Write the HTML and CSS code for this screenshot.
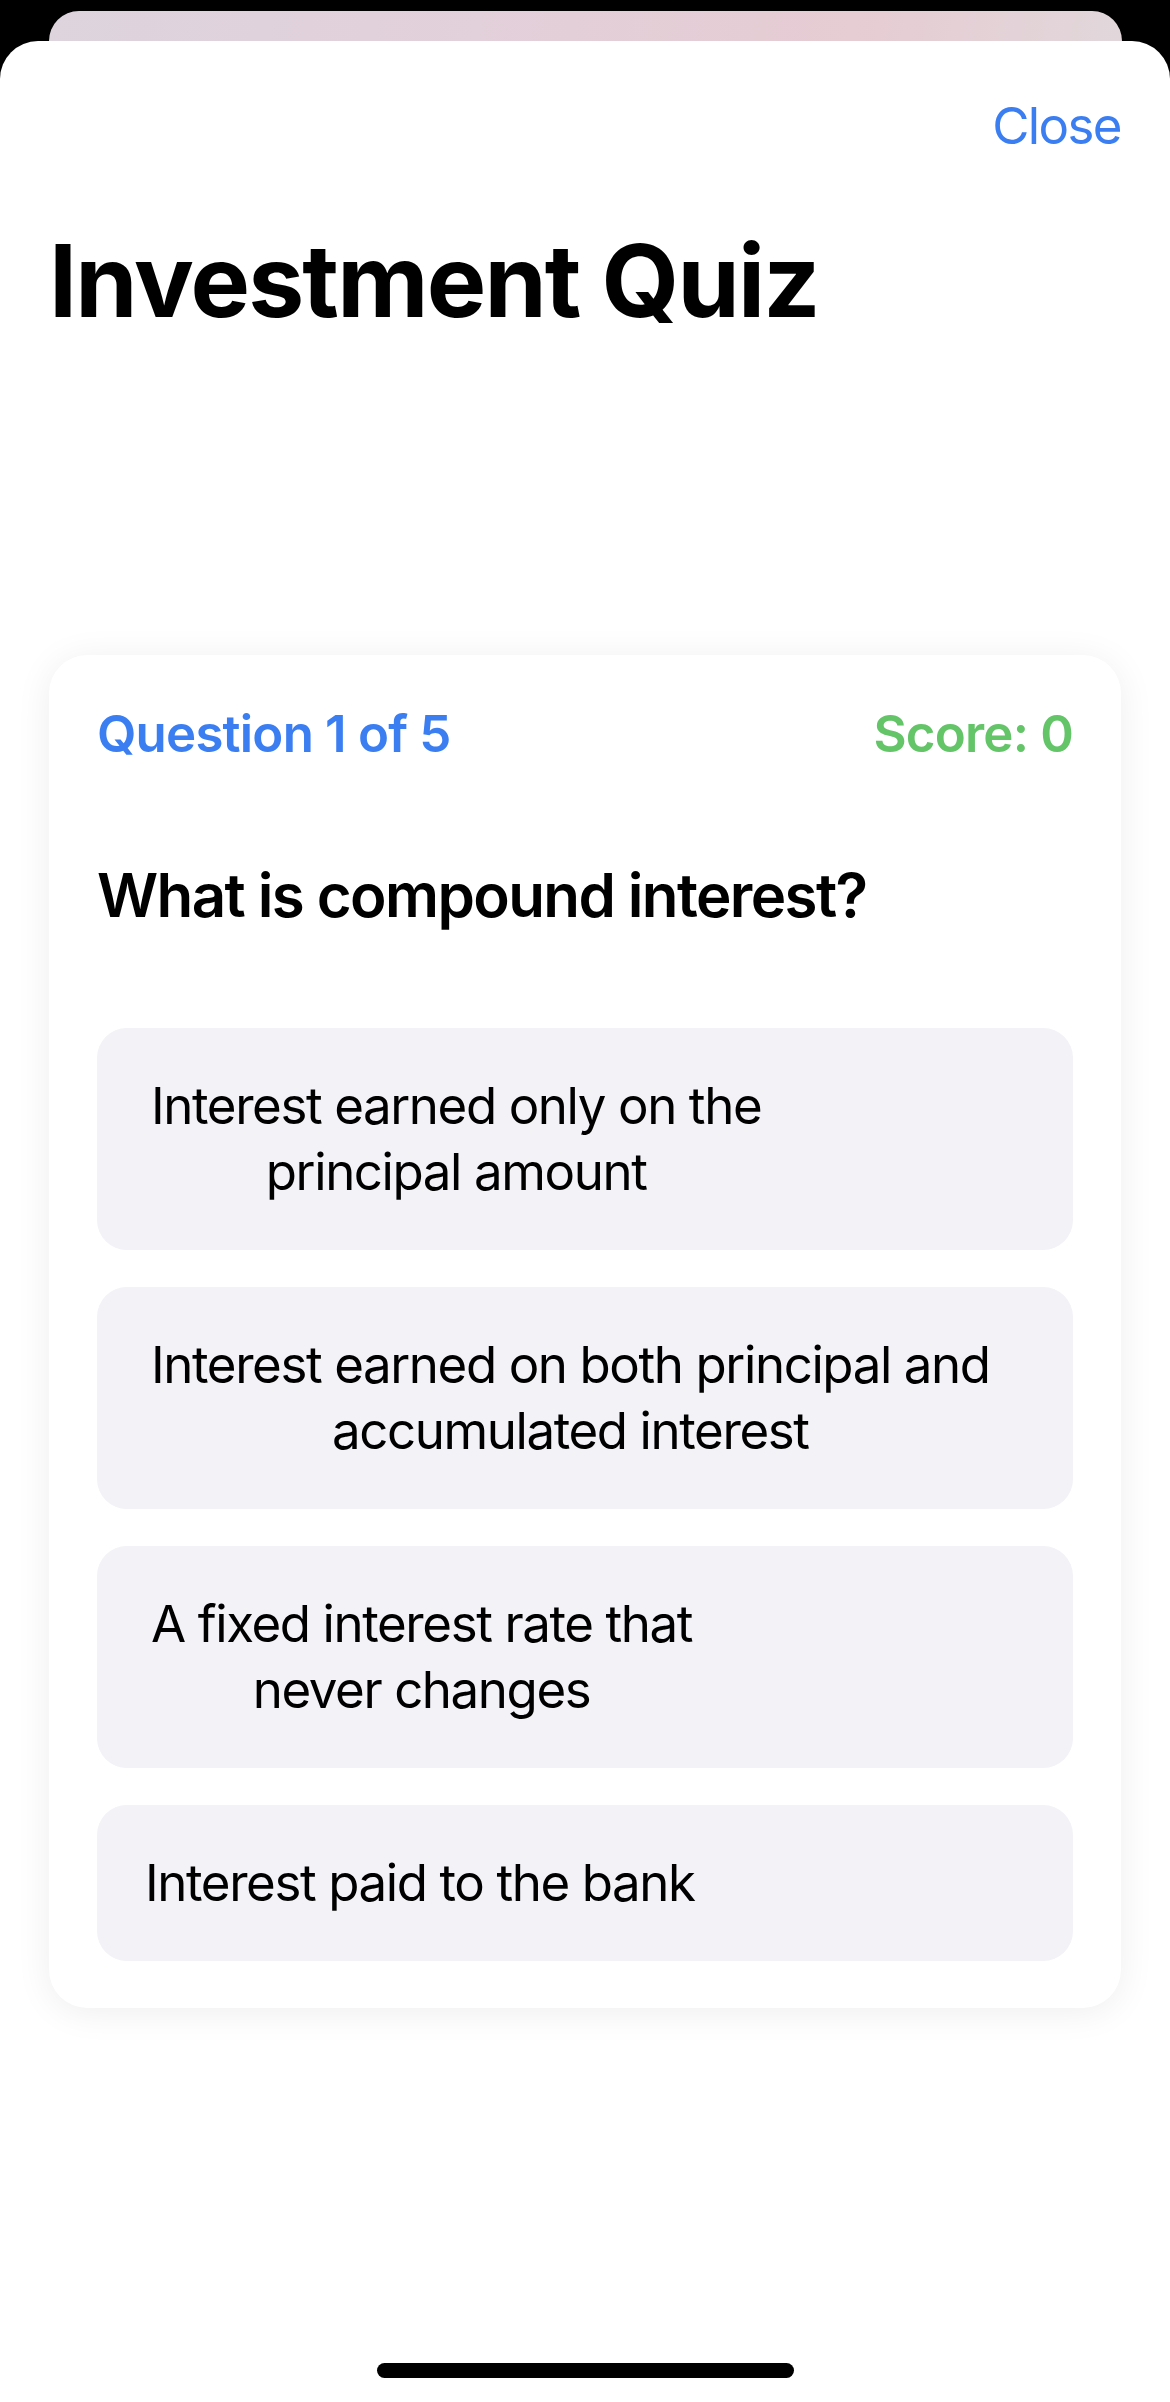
FILE: index.html
```html
<!DOCTYPE html>
<html lang="en">
<head>
<meta charset="utf-8">
<title>Investment Quiz</title>
<link rel="stylesheet" href="styles.css">
</head>
<body>
<div class="screen">
  <div class="back-card"></div>
  <div class="sheet">
    <div class="nav">
      <span class="close">Close</span>
    </div>
    <h1 class="title">Investment Quiz</h1>
    <div class="card">
      <div class="card-head">
        <span class="progress">Question 1 of 5</span>
        <span class="score">Score: 0</span>
      </div>
      <div class="question">What is compound interest?</div>
      <div class="options">
        <div class="option multi"><span class="opt-text">Interest earned only on the<br>principal amount</span></div>
        <div class="option multi"><span class="opt-text">Interest earned on both principal and<br>accumulated interest</span></div>
        <div class="option multi"><span class="opt-text">A fixed interest rate that<br>never changes</span></div>
        <div class="option single"><span class="opt-text">Interest paid to the bank</span></div>
      </div>
    </div>
    <div class="home-indicator"></div>
  </div>
</div>
</body>
</html>
```
FILE: styles.css
```css
* { box-sizing: border-box; }
html, body {
  margin: 0;
  padding: 0;
  background: #000;
}
body {
  width: 1170px;
  height: 2402px;
  overflow: hidden;
  font-family: Inter, "Noto Sans", "Liberation Sans", sans-serif;
  color: #000;
}
.screen {
  display: flex;
  flex-direction: column;
  height: 2402px;
  padding-top: 11px;
}
.back-card {
  height: 30px;
  margin: 0 48px 0 49px;
  border-radius: 31px 31px 0 0;
  background: linear-gradient(100deg, #ddd4de 0%, #e2d0da 40%, #e6ccd3 75%, #e1d7da 100%);
}
.sheet {
  flex: 1;
  background: #fff;
  border-radius: 38px 38px 0 0;
  display: flex;
  flex-direction: column;
  padding: 54px 49px 0 49px;
}
.nav {
  display: flex;
  justify-content: flex-end;
}
.close {
  font-size: 51px;
  line-height: 61px;
  color: #3a7ef2;
  letter-spacing: -1.6px;
}
.title {
  margin: 65px 0 0 0;
  font-size: 100px;
  line-height: 120px;
  font-weight: 700;
  letter-spacing: -1.8px;
}
.card {
  margin-top: 314px;
  background: #fff;
  border-radius: 38px;
  padding: 48px 48px 47px 48px;
  box-shadow: 0 4px 36px rgba(0, 0, 0, 0.07);
}
.card-head {
  display: flex;
  justify-content: space-between;
  font-size: 51px;
  line-height: 61px;
  font-weight: 600;
  letter-spacing: -0.8px;
}
.progress { color: #3a7ef2; }
.score { color: #64c468; }
.question {
  margin-top: 95px;
  font-size: 60px;
  line-height: 72px;
  font-weight: 600;
  letter-spacing: -1.6px;
}
.options {
  margin-top: 97px;
  display: flex;
  flex-direction: column;
  gap: 37px;
}
.option {
  background: #f2f2f7;
  border-radius: 30px;
  padding: 45px 48px;
  font-size: 51px;
  line-height: 66px;
  letter-spacing: -1.4px;
}
.option.multi { padding-left: 54px; }
.opt-text {
  display: inline-block;
  text-align: center;
}
.home-indicator {
  margin: auto auto 24px auto;
  width: 417px;
  height: 15px;
  border-radius: 8px;
  background: #000;
}
```
